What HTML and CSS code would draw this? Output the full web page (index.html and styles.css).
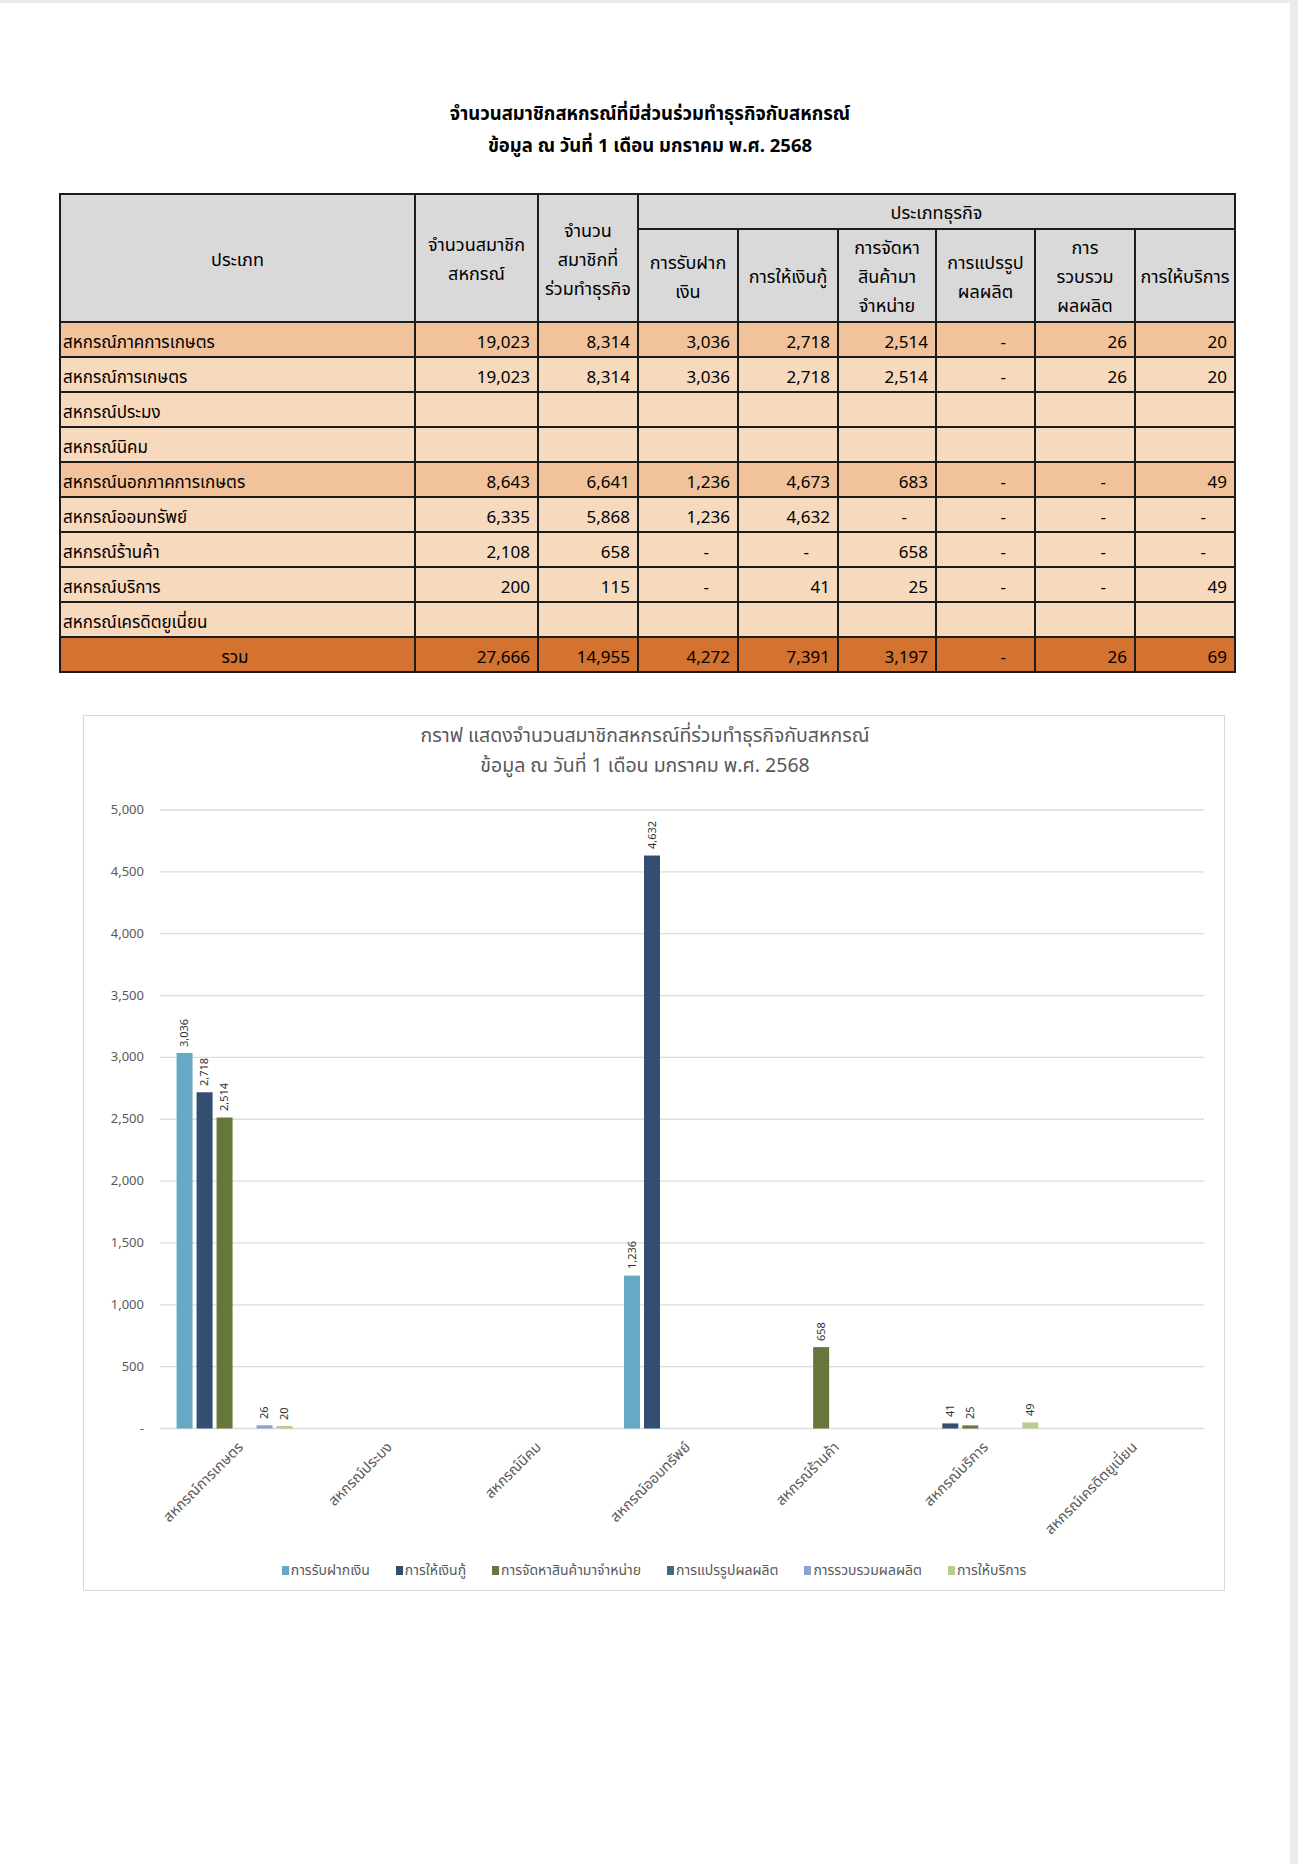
FILE: index.html
```html
<!DOCTYPE html>
<html lang="th">
<head>
<meta charset="utf-8">
<title>จำนวนสมาชิกสหกรณ์ที่มีส่วนร่วมทำธุรกิจกับสหกรณ์</title>
<link rel="stylesheet" href="styles.css">
</head>
<body>
<div class="viewer">
  <main class="page">
    <header class="doc-title">
      <div>จำนวนสมาชิกสหกรณ์ที่มีส่วนร่วมทำธุรกิจกับสหกรณ์</div>
      <div>ข้อมูล ณ วันที่ 1 เดือน มกราคม พ.ศ. 2568</div>
    </header>

    <table class="data">
      <colgroup>
        <col class="c-name"><col class="c-mem"><col class="c-join">
        <col class="c-biz"><col class="c-biz"><col class="c-b98"><col class="c-b99"><col class="c-biz"><col class="c-biz">
      </colgroup>
      <thead>
        <tr class="h1">
          <th rowspan="2">ประเภท</th>
          <th rowspan="2">จำนวนสมาชิก<br>สหกรณ์</th>
          <th rowspan="2">จำนวน<br>สมาชิกที่<br>ร่วมทำธุรกิจ</th>
          <th colspan="6">ประเภทธุรกิจ</th>
        </tr>
        <tr class="h2">
          <th>การรับฝาก<br>เงิน</th>
          <th>การให้เงินกู้</th>
          <th>การจัดหา<br>สินค้ามา<br>จำหน่าย</th>
          <th>การแปรรูป<br>ผลผลิต</th>
          <th>การ<br>รวบรวม<br>ผลผลิต</th>
          <th>การให้บริการ</th>
        </tr>
      </thead>
      <tbody>
        <tr class="sum">
          <td class="name">สหกรณ์ภาคการเกษตร</td>
          <td>19,023</td><td>8,314</td><td>3,036</td><td>2,718</td><td>2,514</td><td class="nil">-</td><td>26</td><td>20</td>
        </tr>
        <tr>
          <td class="name">สหกรณ์การเกษตร</td>
          <td>19,023</td><td>8,314</td><td>3,036</td><td>2,718</td><td>2,514</td><td class="nil">-</td><td>26</td><td>20</td>
        </tr>
        <tr>
          <td class="name">สหกรณ์ประมง</td>
          <td></td><td></td><td></td><td></td><td></td><td></td><td></td><td></td>
        </tr>
        <tr>
          <td class="name">สหกรณ์นิคม</td>
          <td></td><td></td><td></td><td></td><td></td><td></td><td></td><td></td>
        </tr>
        <tr class="sum">
          <td class="name">สหกรณ์นอกภาคการเกษตร</td>
          <td>8,643</td><td>6,641</td><td>1,236</td><td>4,673</td><td>683</td><td class="nil">-</td><td class="nil">-</td><td>49</td>
        </tr>
        <tr>
          <td class="name">สหกรณ์ออมทรัพย์</td>
          <td>6,335</td><td>5,868</td><td>1,236</td><td>4,632</td><td class="nil">-</td><td class="nil">-</td><td class="nil">-</td><td class="nil">-</td>
        </tr>
        <tr>
          <td class="name">สหกรณ์ร้านค้า</td>
          <td>2,108</td><td>658</td><td class="nil">-</td><td class="nil">-</td><td>658</td><td class="nil">-</td><td class="nil">-</td><td class="nil">-</td>
        </tr>
        <tr>
          <td class="name">สหกรณ์บริการ</td>
          <td>200</td><td>115</td><td class="nil">-</td><td>41</td><td>25</td><td class="nil">-</td><td class="nil">-</td><td>49</td>
        </tr>
        <tr>
          <td class="name">สหกรณ์เครดิตยูเนี่ยน</td>
          <td></td><td></td><td></td><td></td><td></td><td></td><td></td><td></td>
        </tr>
        <tr class="total">
          <td class="name center">รวม</td>
          <td>27,666</td><td>14,955</td><td>4,272</td><td>7,391</td><td>3,197</td><td class="nil">-</td><td>26</td><td>69</td>
        </tr>
      </tbody>
    </table>

    <section class="chart">
      <h2 class="chart-title">กราฟ แสดงจำนวนสมาชิกสหกรณ์ที่ร่วมทำธุรกิจกับสหกรณ์<br>ข้อมูล ณ วันที่ 1 เดือน มกราคม พ.ศ. 2568</h2>
      <svg class="plot" width="1140" height="777" viewBox="0 0 1140 777">
        <g class="grid">
          <line x1="76" y1="29" x2="1120" y2="29"/>
          <line x1="76" y1="90.85" x2="1120" y2="90.85"/>
          <line x1="76" y1="152.7" x2="1120" y2="152.7"/>
          <line x1="76" y1="214.55" x2="1120" y2="214.55"/>
          <line x1="76" y1="276.4" x2="1120" y2="276.4"/>
          <line x1="76" y1="338.25" x2="1120" y2="338.25"/>
          <line x1="76" y1="400.1" x2="1120" y2="400.1"/>
          <line x1="76" y1="461.95" x2="1120" y2="461.95"/>
          <line x1="76" y1="523.8" x2="1120" y2="523.8"/>
          <line x1="76" y1="585.65" x2="1120" y2="585.65"/>
          <line class="axis" x1="76" y1="647.5" x2="1120" y2="647.5"/>
        </g>
        <g class="ylab">
          <text x="60" y="29">5,000</text>
          <text x="60" y="90.85">4,500</text>
          <text x="60" y="152.7">4,000</text>
          <text x="60" y="214.55">3,500</text>
          <text x="60" y="276.4">3,000</text>
          <text x="60" y="338.25">2,500</text>
          <text x="60" y="400.1">2,000</text>
          <text x="60" y="461.95">1,500</text>
          <text x="60" y="523.8">1,000</text>
          <text x="60" y="585.65">500</text>
          <text x="60" y="647.5">-</text>
        </g>
        <g class="bars">
          <rect class="s1" x="92.57" y="271.95" width="16" height="375.55"/>
          <rect class="s2" x="112.57" y="311.28" width="16" height="336.22"/>
          <rect class="s3" x="132.57" y="336.52" width="16" height="310.98"/>
          <rect class="s5" x="172.57" y="644.28" width="16" height="3.22"/>
          <rect class="s6" x="192.57" y="645.03" width="16" height="2.47"/>
          <rect class="s1" x="540" y="494.61" width="16" height="152.89"/>
          <rect class="s2" x="560" y="74.52" width="16" height="572.98"/>
          <rect class="s3" x="729.14" y="566.11" width="16" height="81.39"/>
          <rect class="s2" x="858.29" y="642.43" width="16" height="5.07"/>
          <rect class="s3" x="878.29" y="644.41" width="16" height="3.09"/>
          <rect class="s6" x="938.29" y="641.44" width="16" height="6.06"/>
        </g>
        <g class="vlab">
          <text transform="translate(100.57 266) rotate(-90)">3,036</text>
          <text transform="translate(120.57 305) rotate(-90)">2,718</text>
          <text transform="translate(140.57 330) rotate(-90)">2,514</text>
          <text transform="translate(180.57 638) rotate(-90)">26</text>
          <text transform="translate(200.57 639) rotate(-90)">20</text>
          <text transform="translate(548 488) rotate(-90)">1,236</text>
          <text transform="translate(568 68) rotate(-90)">4,632</text>
          <text transform="translate(737.14 560) rotate(-90)">658</text>
          <text transform="translate(866.29 636) rotate(-90)">41</text>
          <text transform="translate(886.29 638) rotate(-90)">25</text>
          <text transform="translate(946.29 635) rotate(-90)">49</text>
        </g>
        <g class="xlab">
          <text transform="translate(160 667) rotate(-45)">สหกรณ์การเกษตร</text>
          <text transform="translate(309 667) rotate(-45)">สหกรณ์ประมง</text>
          <text transform="translate(458 667) rotate(-45)">สหกรณ์นิคม</text>
          <text transform="translate(607 667) rotate(-45)">สหกรณ์ออมทรัพย์</text>
          <text transform="translate(756 667) rotate(-45)">สหกรณ์ร้านค้า</text>
          <text transform="translate(905 667) rotate(-45)">สหกรณ์บริการ</text>
          <text transform="translate(1054 667) rotate(-45)">สหกรณ์เครดิตยูเนี่ยน</text>
        </g>
      </svg>
      <ul class="legend">
        <li><span class="key s1"></span>การรับฝากเงิน</li>
        <li><span class="key s2"></span>การให้เงินกู้</li>
        <li><span class="key s3"></span>การจัดหาสินค้ามาจำหน่าย</li>
        <li><span class="key s4"></span>การแปรรูปผลผลิต</li>
        <li><span class="key s5"></span>การรวบรวมผลผลิต</li>
        <li><span class="key s6"></span>การให้บริการ</li>
      </ul>
    </section>
  </main>
</div>
</body>
</html>
```

FILE: styles.css
```css
* { box-sizing: border-box; }

html, body {
  margin: 0;
  padding: 0;
  background: #ececec;
}

body {
  font-family: "Noto Sans Thai", "Noto Sans", "DejaVu Sans", sans-serif;
  color: #000;
}

.viewer {
  display: flex;
  padding: 3px 8px 0 0;
  min-height: 1864px;
}

.page {
  flex: 1;
  background: #fff;
  padding-top: 95px;
}

.doc-title {
  text-align: center;
  font-weight: 700;
  font-size: 18.5px;
  line-height: 32px;
  padding-left: 10px;
}

/* ---------- table ---------- */
.data {
  margin: 31px 0 0 59px;
  width: 1175px;
  border-collapse: collapse;
  table-layout: fixed;
  font-size: 17px;
}

.c-name { width: 355px; }
.c-mem { width: 123px; }
.c-join { width: 100px; }
.c-biz { width: 100px; }
.c-b98 { width: 98px; }
.c-b99 { width: 99px; }

.data th,
.data td {
  border: 2px solid #1c1c1c;
  padding: 0 7px;
}

.data th {
  background: #d9d9d9;
  font-weight: 400;
  font-size: 18px;
  line-height: 29px;
  text-align: center;
  padding: 4px 2px 0;
  white-space: nowrap;
}

.data .h1 { height: 35px; }
.data .h2 { height: 93px; }

.data td {
  height: 35px;
  text-align: right;
  background: #f7d9bd;
  line-height: 20px;
  padding-top: 6px;
  padding-bottom: 0;
}

.data td.name {
  text-align: left;
  padding-left: 2px;
}

.data td.center { text-align: center; }

.data td.nil { padding-right: 28px; }

.data tr.sum td { background: #f2c39a; }
.data tr.total td { background: #d4722f; }

/* ---------- chart ---------- */
.chart {
  margin: 42px 0 0 83px;
  width: 1142px;
  border: 1px solid #d9d9d9;
  padding: 5px 0 8px;
}

.chart-title {
  margin: 0;
  padding-right: 18px;
  text-align: center;
  font-weight: 400;
  font-size: 19.5px;
  line-height: 30px;
  color: #595959;
}

.plot {
  display: block;
}

.grid line {
  stroke: #dcdcdc;
  stroke-width: 1.3;
}

.ylab text {
  font-size: 13px;
  fill: #595959;
  text-anchor: end;
  dominant-baseline: central;
}

.vlab text {
  font-size: 11px;
  fill: #333333;
  dominant-baseline: central;
}

.xlab text {
  font-size: 14.5px;
  fill: #595959;
  text-anchor: end;
}

.s1 { fill: #67a9c5; background: #67a9c5; }
.s2 { fill: #344d72; background: #344d72; }
.s3 { fill: #67773b; background: #67773b; }
.s4 { fill: #3e6a7d; background: #3e6a7d; }
.s5 { fill: #8aa5d0; background: #8aa5d0; }
.s6 { fill: #bacc90; background: #bacc90; }

.legend {
  list-style: none;
  margin: 0;
  padding: 0;
  display: flex;
  justify-content: center;
  gap: 26px;
  height: 24px;
  align-items: center;
  font-size: 14px;
  color: #595959;
}

.legend li {
  display: flex;
  align-items: center;
  gap: 2px;
}

.key {
  display: inline-block;
  width: 7px;
  height: 9px;
}
```
